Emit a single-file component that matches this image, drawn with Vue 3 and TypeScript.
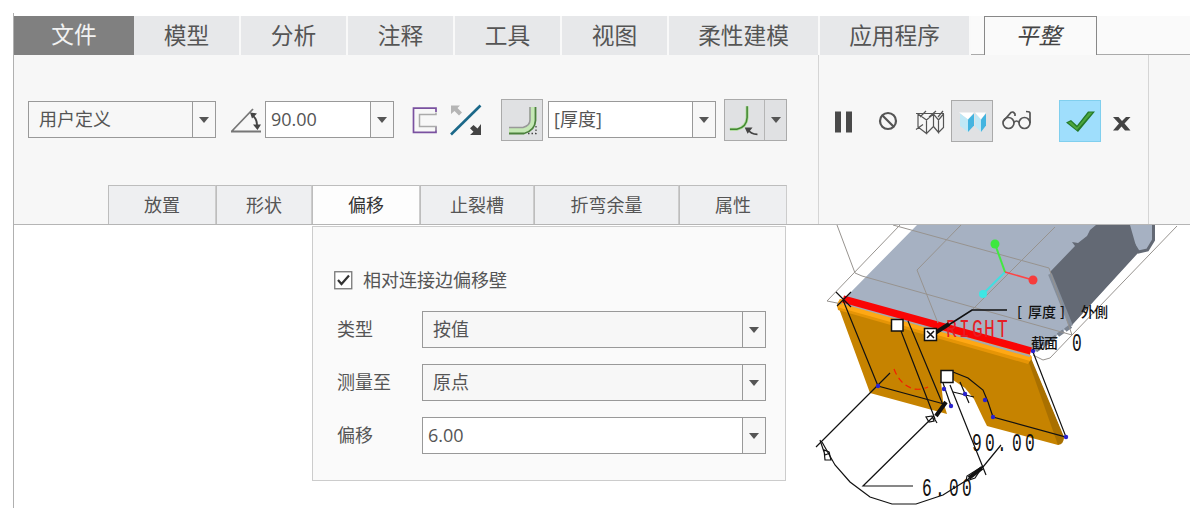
<template>
    <div class="window">
        <nav class="tabs">
            <button class="tab file">文件</button>
            <button v-for="tab of tabs" :key="tab" class="tab" :class="{ wide: tab.length > 2 }">{{ tab }}</button>
            <span class="tabs-gap"></span>
            <button class="tab active">平整</button>
            <span class="tabs-rest"></span>
        </nav>

        <section class="ribbon">
            <div class="dashboard">
                <div class="tools">
                    <div class="combo type readonly"><span class="text">用户定义</span><i class="arrow"></i></div>
                    <svg class="icon-angle" width="32" height="28" viewBox="0 0 32 28">
                        <path d="M1.5 24.5 23 2M1 24.5h30" fill="none" stroke="#777" stroke-width="1.8" />
                        <path d="M22 8c4 3 5.500 7 5 12" fill="none" stroke="#444" stroke-width="1.8" />
                        <path d="M20 5.500l7 1-5 5zM23 17.500h8l-3.500 5.500z" fill="#444" />
                    </svg>
                    <div class="combo angle"><span class="text">90.00</span><i class="arrow"></i></div>
                    <svg class="icon-profile" width="26" height="28" viewBox="0 0 26 28">
                        <path d="M24 6V2.200H1.500v24.200H24V20.500" fill="none" stroke="#7a51a0" stroke-width="1.700" />
                        <path d="M24 6.500V8.500H7.500v12H24v4" fill="none" stroke="#aaa" stroke-width="1.500" />
                    </svg>
                    <svg class="icon-flip" width="34" height="32" viewBox="0 0 34 32">
                        <path d="M2 30.500 31.500 1.500" stroke="#1b6889" stroke-width="2.600" />
                        <path d="M2 1.500h9L8.500 4l4.500 4.500L10 11.500 5.500 7 2 10z" fill="#b5b5b5" />
                        <path d="M32 20v11H21l3.500-3.300-3.500-3.500 3.500-3.200 4 3.500z" fill="#444" />
                    </svg>
                    <div class="toggle pressed">
                        <svg width="40" height="40" viewBox="0 0 40 40">
                            <path d="M7 30.500h14q9-2 9-10V7" fill="none" stroke="#c5e8b5" stroke-width="5.500" />
                            <path d="M7 27.500h14q7-2 7-7.500V7" fill="none" stroke="#999" stroke-width="1.600" />
                            <path d="M7 33.500h15q11-3 11.500-13V7" fill="none" stroke="#4c813d" stroke-width="1.800" />
                            <path d="M26 33.500h8V25" fill="none" stroke="#444" stroke-width="1.300" stroke-dasharray="1.500 2" />
                        </svg>
                    </div>
                    <div class="combo thickness"><span class="text">[厚度]</span><i class="arrow"></i></div>
                    <div class="toggle split">
                        <svg width="40" height="40" viewBox="0 0 40 40">
                            <path d="M5 29.500h7q10-2 10.500-12V6" fill="none" stroke="#a8dc93" stroke-width="3" />
                            <path d="M5 29.500h7q10-2 10.500-12V6" fill="none" stroke="#428532" stroke-width="1.500" />
                            <path d="M23 29q3 5.500 10 5.500" fill="none" stroke="#444" stroke-width="1.800" />
                            <path d="M20 27.500h8l-5 6.500z" fill="#444" />
                        </svg>
                        <i class="arrow"></i>
                    </div>
                </div>

                <div class="slide-tabs">
                    <button v-for="tab of slideTabs" :key="tab.label" class="slide-tab"
                        :class="{ selected: tab.label === selected }" :style="{ width: `${tab.width}px` }"
                        @click="selected = tab.label">{{ tab.label }}</button>
                </div>
            </div>

            <div class="controls">
                <svg class="icon-pause" width="18" height="22" viewBox="0 0 18 22">
                    <path d="M0 .500h6v21h-6zM11 .500h6v21h-6z" fill="#4a4a4a" />
                </svg>
                <svg class="icon-none" width="20" height="20" viewBox="0 0 20 20">
                    <circle cx="10" cy="10" r="8" fill="none" stroke="#555" stroke-width="2.200" />
                    <path d="M4.500 4.500l11 11" stroke="#555" stroke-width="2.200" />
                </svg>
                <svg class="icon-wire" width="30" height="26" viewBox="0 0 30 26">
                    <path d="M1 4.500h28M3 5l8.500 6 7-6 5 6 5-6M3 5v13l8.500 6.500V11M11.500 24.500l7-7V5M18.500 17.500l5 6V11M23.500 23.500l5-5V5M1 20.500l7-5M5 8l6-6M14 8l7-6M23 8l5-6"
                        fill="none" stroke="#555" stroke-width="1.200" />
                </svg>
                <div class="toggle pressed">
                    <svg width="40" height="40" viewBox="0 0 40 40">
                        <path d="M7 11.500h15l-6 7zM23 11.500h11l-5 7z" fill="#fff" />
                        <path d="M8 12.500l8 6v12.500l-8-6z" fill="#bfe8f6" />
                        <path d="M16 18.500l6-6v12l-6 6.500z" fill="#43b4e0" />
                        <path d="M23 12.500l6 6v12.500l-6-6z" fill="#bfe8f6" />
                        <path d="M29 18.500l5-6v12l-5 6.500z" fill="#43b4e0" />
                    </svg>
                </div>
                <svg class="icon-glasses" width="30" height="21" viewBox="0 0 30 21">
                    <g fill="none" stroke="#555" stroke-width="1.700">
                        <circle cx="6.500" cy="13" r="5.500" />
                        <circle cx="22.500" cy="13" r="5.500" />
                        <path d="M12 12.500q2.500-3 5 0M1.500 11 9 2.500q2-1.500 4 1.500v2M28 13V3q0-1.500-4-1.500" />
                    </g>
                </svg>
                <div class="toggle accept">
                    <svg width="40" height="40" viewBox="0 0 40 40">
                        <path d="M6 21.500l5-2.500 6 5.500L28 10.500h7L18 31z" fill="#24792a" />
                        <path d="M8 21.500l3-1 6 6L29 11.500h3.500L17 29z" fill="#4da63d" />
                    </svg>
                </div>
                <svg class="icon-close" width="20" height="16" viewBox="0 0 20 16">
                    <path d="M1 1h5.500l3.500 4 4-4h4.500l-6 6.500 6 7h-5.500L9.500 10.500 6 14.500H1l6-7z" fill="#444" />
                </svg>
            </div>
        </section>

        <section class="workspace">
            <div class="panel">
                <label class="check">
                    <svg width="19" height="19" viewBox="0 0 19 19">
                        <rect x=".75" y=".75" width="17" height="17" fill="#fff" stroke="#777" stroke-width="1.300" />
                        <path d="M4 9l3.500 4L15 4.500" fill="none" stroke="#333" stroke-width="2.200" />
                    </svg>
                    <span>相对连接边偏移壁</span>
                </label>
                <div v-for="field of fields" :key="field.label" class="field">
                    <span class="label">{{ field.label }}</span>
                    <div class="combo" :class="{ readonly: !field.editable }">
                        <span class="text">{{ field.value }}</span><i class="arrow"></i>
                    </div>
                </div>
            </div>

            <svg class="scene" width="380" height="283" viewBox="810 225 380 283">
                <!-- sheet metal body -->
                <path d="M917 225H1153V241L1148 250 1138 252 1072 325 1052 339 1035 352 846 297z" fill="#a6b1c2" />
                <path d="M1096 225l-6 5-3 6-9 7-6-1 3 4-25 26 22 53 66-72-8-28z" fill="#636974" />
                <path d="M1050 274l21 52" stroke="#858f9d" stroke-width="4" />
                <path d="M1153.500 225v15l-6 10-9 2-5-8" fill="none" stroke="#636974" stroke-width="3" />
                <path d="M1071 326l-37 26" stroke="#7b8491" stroke-width="4" stroke-dasharray="7 2" />

                <!-- flange wall -->
                <path d="M837 303 1030 357 1064 438 1058 445 987 426 983 418 974 399 965 388 953 380 941 381 943 401 947 414 870 393z" fill="#c68300" />
                <path d="M1028 360l3-2 33 79q0 7-6 8z" fill="#a97000" />
                <path d="M837 305l3-6 188 53 4 6-4 6-190-54z" fill="#e69506" />
                <path d="M837 304l3-5 188 53 4 5-2 4-193-54z" fill="#ffa814" />
                <path d="M845 303.500 1030 356" stroke="#a6a9ae" stroke-width="2" />
                <path d="M843 299 1031 351" stroke="#fa0505" stroke-width="7.500" />

                <!-- datum planes -->
                <g fill="none" stroke="#97938f" stroke-width="1">
                    <path d="M837 225l18 48 7 3 210 59" />
                    <path d="M900 225l-73 76 15 3M893 225l156 43 23 67" />
                    <path d="M961 225l-44 45 21 53M1055 227l-83 83" />
                    <path d="M1177 226l-105 109-22 23-7 2-10-5" />
                </g>

                <!-- spin center -->
                <path d="M1005 272l-22 22" stroke="#43dde0" stroke-width="2" />
                <path d="M1005 272l-10-28" stroke="#42e842" stroke-width="2" />
                <path d="M1005 272l28 8" stroke="#f44" stroke-width="1.500" />
                <circle cx="983" cy="294" r="4" fill="#3ee6e3" />
                <circle cx="995" cy="244" r="4.500" fill="#3ee83e" />
                <circle cx="1033" cy="280" r="4.500" fill="#f63c3c" />

                <text class="note datum" transform="scale(.72 1)" :x="squeeze([946, 959, 972, 984, 997], .72)" y="337">RIGHT</text>

                <!-- sketch and dimensions -->
                <g fill="none" stroke="#111" stroke-width="1.200">
                    <path d="M836 292l15 15M851 292l-14 14M843 300l35 86 66 18M890 373l-74 74" />
                    <path d="M901 331l34 88M908 321l35 84M934 416l-71 70h50" />
                    <path d="M822 442l13 23 15 17 20 15 22 7h24l27-9 24-15 16-13 18-22" />
                    <path d="M950 385l36 90M953 372l15 6 15 12 5 12 5 15 73 20-33-85" />
                    <path d="M953 392l21 5M960 382l9 21M943 383l8 23" />
                    <path d="M936 333l36-23h35" stroke-width="1.700" />
                    <path d="M935 333l14-9M936 416l10-14M969 478l13-10" stroke-width="4" />
                    <path d="M820 440l5 15 5-2M824 450l1 10 6 0-2-8zM983 466l-16 10-1 5 9-3zM932 416l-6 1 3 5 5-1zM934 418l3 5" />
                </g>
                <path d="M894 369q6 16 20 20 7 1 14-2" fill="none" stroke="#f51c00" stroke-width="1.200" stroke-dasharray="6 4" />
                <circle v-for="[x, y] of vertices" :key="x" :cx="x" :cy="y" r="2.200" fill="#2822cf" />
                <g fill="#fff" stroke="#111" stroke-width="1.500">
                    <rect x="891.500" y="319.500" width="11.500" height="11.500" />
                    <rect x="924.500" y="328.500" width="12" height="12" />
                    <rect x="941" y="370.500" width="12" height="12" />
                    <path d="M927 331l7 7M934 331l-7 7" />
                </g>

                <g class="note">
                    <text x="1017 1028 1042 1060" y="317">[厚度]</text>
                    <text x="1081 1094" y="317">外側</text>
                    <text x="1031 1044" y="348">截面</text>
                    <g transform="scale(.65 1)">
                        <text class="dim" :x="squeeze([1072], .65)" y="351">0</text>
                        <text class="dim" :x="squeeze([972, 985, 997, 1012, 1025], .65)" y="451">90.00</text>
                        <text class="dim" :x="squeeze([922, 935, 949, 962], .65)" y="496">6.00</text>
                    </g>
                </g>
            </svg>
        </section>
    </div>
</template>

<script setup lang="ts">
import { ref } from 'vue';

interface SlideTab {
    label: string;
    width: number;
}

interface Field {
    label: string;
    value: string;
    editable?: boolean;
}

const tabs: string[] = ['模型', '分析', '注释', '工具', '视图', '柔性建模', '应用程序'];

const slideTabs: SlideTab[] = [
    { label: '放置', width: 108 },
    { label: '形状', width: 96 },
    { label: '偏移', width: 108 },
    { label: '止裂槽', width: 114 },
    { label: '折弯余量', width: 145 },
    { label: '属性', width: 108 },
];

const selected = ref('偏移');

const fields: Field[] = [
    { label: '类型', value: '按值' },
    { label: '测量至', value: '原点' },
    { label: '偏移', value: '6.00', editable: true },
];

// Sketch vertices of the flange outline, in scene coordinates.
const vertices: [number, number][] = [
    [878, 386], [944, 389], [951, 406], [965, 394], [985, 400], [993, 417], [1066, 437], [1033, 351],
];

// Glyph positions for text that is drawn under a horizontal scale.
function squeeze(xs: number[], scale: number) {
    return xs.map((x) => (x / scale).toFixed(1)).join(' ');
}
</script>

<style>
body {
    background: #fff;
}
</style>

<style scoped>
    .window {
        box-sizing: border-box;
        width: 1177px;
        height: 495px;
        margin: 13px 0 0 13px;
        padding-top: 3px;
        border-left: 1px solid #b0b0b0;
        font-family: "Open Sans", "Noto Sans CJK SC", sans-serif;
        font-size: 18px;
        color: #555;
    }

    button {
        box-sizing: border-box;
        padding: 0;
        border: 0;
        font: inherit;
        color: inherit;
    }

    .tabs {
        display: flex;
        height: 39px;
        background: #fafafa;
    }

    .tab {
        width: 107px;
        padding-bottom: 2px;
        border-right: 2px solid #f9f9f9;
        background: #e7e8ea;
        font-family: "Noto Sans CJK SC", sans-serif;
        font-size: 22.700px;
        line-height: 34px;
        white-space: nowrap;
    }

    .tab.file {
        width: 120px;
        padding-bottom: 4px;
        border-right: 0;
        background: #808080;
        color: #f2f2f2;
    }

    .tab.wide {
        width: 151px;
    }

    .tab.active {
        width: 113px;
        padding-right: 4px;
        border: 1px solid #888;
        border-bottom: 0;
        background: #fafafa;
        font-style: italic;
        color: #444;
    }

    .tabs-gap {
        width: 13px;
        border-bottom: 1px solid #aaa;
    }

    .tabs-rest {
        flex: 1;
        border-bottom: 1px solid #aaa;
    }

    .ribbon {
        display: flex;
        box-sizing: border-box;
        height: 170px;
        border-bottom: 1px solid #b5b5b5;
        background: #f7f7f7;
    }

    .dashboard {
        display: flex;
        flex-direction: column;
        justify-content: space-between;
        width: 804px;
        border-right: 1px solid #d5d5d5;
    }

    .tools {
        display: flex;
        align-items: center;
        height: 42px;
        padding: 44px 0 0 14px;
    }

    .combo {
        display: flex;
        box-sizing: border-box;
        height: 37px;
        border: 1px solid #999;
        background: #fff;
    }

    .tools .combo {
        margin-bottom: 1px;
    }

    .combo .text {
        flex: 1;
        padding-left: 5px;
        line-height: 34px;
        white-space: nowrap;
    }

    .combo.readonly {
        background: #f7f7f7;
    }

    .combo.readonly .text {
        padding-left: 10px;
    }

    .arrow {
        display: flex;
        align-items: center;
        justify-content: center;
        width: 22px;
        border-left: 1px solid #999;
        background: #f7f7f7;
    }

    .arrow::before {
        content: "";
        border: 5.500px solid transparent;
        border-top: 6px solid #555;
        border-bottom: 0;
    }

    .type {
        width: 188px;
    }

    .angle {
        width: 129px;
    }

    .tools .thickness {
        width: 168px;
        margin-left: 5px;
    }

    .icon-angle {
        margin: 2px 3px 0 14px;
    }

    .icon-profile {
        margin: 0 0 1px 18px;
    }

    .icon-flip {
        margin: 0 18px 1px 11px;
    }

    .toggle {
        display: flex;
        box-sizing: border-box;
        width: 42px;
        height: 42px;
        border: 1px solid #aaa;
        background: #e0e1e3;
    }

    .split {
        width: 63px;
        margin-left: 8px;
    }

    .split .arrow {
        width: 21px;
        border-left-color: #b5b5b5;
        background: none;
    }

    .slide-tabs {
        display: flex;
        margin: 0 0 0 94px;
    }

    .slide-tab {
        height: 39px;
        border: 1px solid #bdbdbd;
        border-right-color: #ccc;
        border-bottom: 0;
        background: #eeeff1;
        line-height: 36px;
    }

    .slide-tab.selected {
        background: #fdfdfd;
        color: #333;
    }

    /* the right border divides this group from the empty end of the ribbon */
    .controls {
        display: flex;
        align-items: flex-start;
        box-sizing: border-box;
        width: 330px;
        padding: 45px 0 0 16px;
        border-right: 1px solid #d5d5d5;
    }

    .icon-pause {
        margin-top: 11px;
    }

    .icon-none {
        margin: 11px 0 0 25px;
    }

    .icon-wire {
        margin: 9px 6px 0 17px;
    }

    .icon-glasses {
        margin: 10px 27px 0 9px;
    }

    .accept {
        border-color: #80cfee;
        background: #9fdefc;
    }

    .icon-close {
        margin: 16px 0 0 11px;
    }

    .workspace {
        display: flex;
        align-items: flex-start;
    }

    .panel {
        box-sizing: border-box;
        width: 474px;
        height: 255px;
        margin: 1px 24px 0 298px;
        padding: 38px 19px 0 21px;
        border: 1px solid #ccc;
        background: #fafafa;
    }

    .check {
        display: flex;
        align-items: center;
        gap: 10px;
        height: 30px;
    }

    .check span {
        margin-bottom: 3px;
    }

    .field {
        display: flex;
        align-items: center;
        margin-top: 16px;
    }

    .label {
        box-sizing: border-box;
        width: 85px;
        margin-right: 3px;
        padding: 0 0 4px 3px;
    }

    .field .combo {
        flex: 1;
    }

    .scene {
        flex: none;
    }

    .note {
        font-family: "Noto Sans CJK SC", sans-serif;
        font-size: 14px;
        font-weight: 500;
        fill: #111;
    }

    .dim,
    .datum {
        font-family: "Liberation Mono", monospace;
        font-size: 25px;
        font-weight: 400;
    }

    .datum {
        fill: #e51e25;
    }
</style>
